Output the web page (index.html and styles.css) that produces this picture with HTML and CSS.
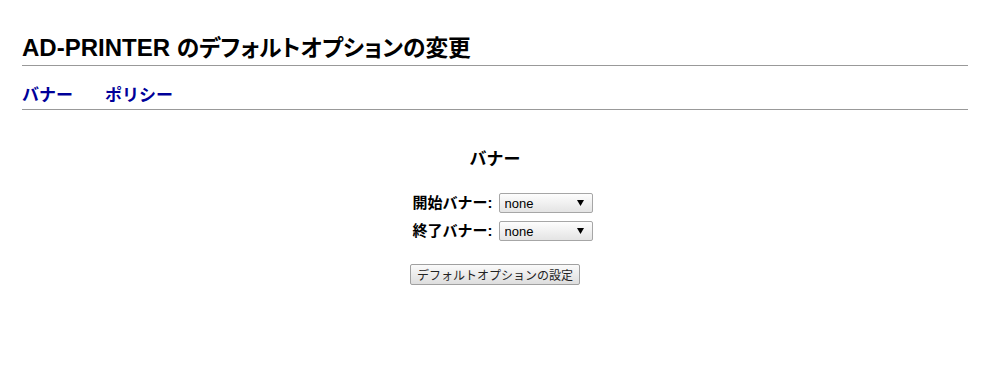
FILE: index.html
```html
<!DOCTYPE html>
<html>
    <head>
        <title>
            AD-PRINTER のデフォルトオプションの変更
        </title>
        <link rel="stylesheet" href="styles.css">
    </head>
    <body>
        <div class="page">
            <h1 class="title">AD-PRINTER <span class="title-ja">のデフォルトオプションの変更</span></h1>

            <div class="tabs">
                <a class="tab" href="#banner">バナー</a>
                <a class="tab" href="#policy">ポリシー</a>
            </div>

            <form class="options">
                <h2 class="section-title">バナー</h2>

                <div class="fields">
                    <label class="field-label" for="job-sheets-start">開始バナー:</label>
                    <select class="field-select" id="job-sheets-start">
                        <option>none</option>
                    </select>
                    <label class="field-label" for="job-sheets-end">終了バナー:</label>
                    <select class="field-select" id="job-sheets-end">
                        <option>none</option>
                    </select>
                </div>

                <div class="actions">
                    <button class="btn" type="button">デフォルトオプションの設定</button>
                </div>
            </form>
        </div>
    </body>
</html>
```

FILE: styles.css
```css
body {
    margin: 0;
    background: white;
    color: black;
    font-family: "Liberation Sans", "Noto Sans CJK JP", sans-serif;
}
.page {
    padding: 0 36px 0 22px;
}
.title {
    margin: 34px 0 0;
    padding-bottom: 3px;
    font-size: 24px;
    line-height: 28px;
    font-weight: bold;
    border-bottom: 1px solid #999;
}
.title-ja {
    font-size: 22.7px;
    font-feature-settings: "palt";
}
.tabs {
    display: flex;
    gap: 32px;
    padding: 22px 0 5px;
    border-bottom: 1px solid #999;
}
.tab {
    color: #000099;
    font-size: 17px;
    line-height: 16px;
    font-weight: bold;
    text-decoration: none;
}
.options {
    display: flex;
    flex-direction: column;
    align-items: center;
}
.section-title {
    margin: 40px 0 0;
    font-size: 17px;
    line-height: 20px;
    font-weight: bold;
}
.fields {
    display: grid;
    grid-template-columns: auto auto;
    column-gap: 6px;
    row-gap: 8px;
    align-items: center;
    margin-top: 23px;
    padding-left: 15px;
}
.field-label {
    text-align: right;
    font-size: 15px;
    line-height: 20px;
    font-weight: bold;
}
.field-select {
    appearance: none;
    width: 94px;
    height: 20px;
    margin: 0;
    padding: 0 0 0 5px;
    border: 1px solid #a6a6a6;
    border-radius: 2px;
    font-family: "Liberation Sans", sans-serif;
    font-size: 13px;
    color: black;
    background: url("data:image/svg+xml,%3Csvg xmlns='http://www.w3.org/2000/svg' width='7' height='6'%3E%3Cpath d='M0 0h7L3.5 6z' fill='%23000'/%3E%3C/svg%3E") no-repeat right 8px center,
                linear-gradient(#fdfdfd, #e4e4e4);
}
.actions {
    margin-top: 23px;
}
.btn {
    height: 21px;
    margin: 0;
    padding: 0 6px;
    border: 1px solid #a0a0a0;
    border-radius: 2px;
    background: linear-gradient(#fafafa, #dedede);
    font-family: "Noto Sans CJK JP", sans-serif;
    font-size: 12px;
    color: #222;
}
```
